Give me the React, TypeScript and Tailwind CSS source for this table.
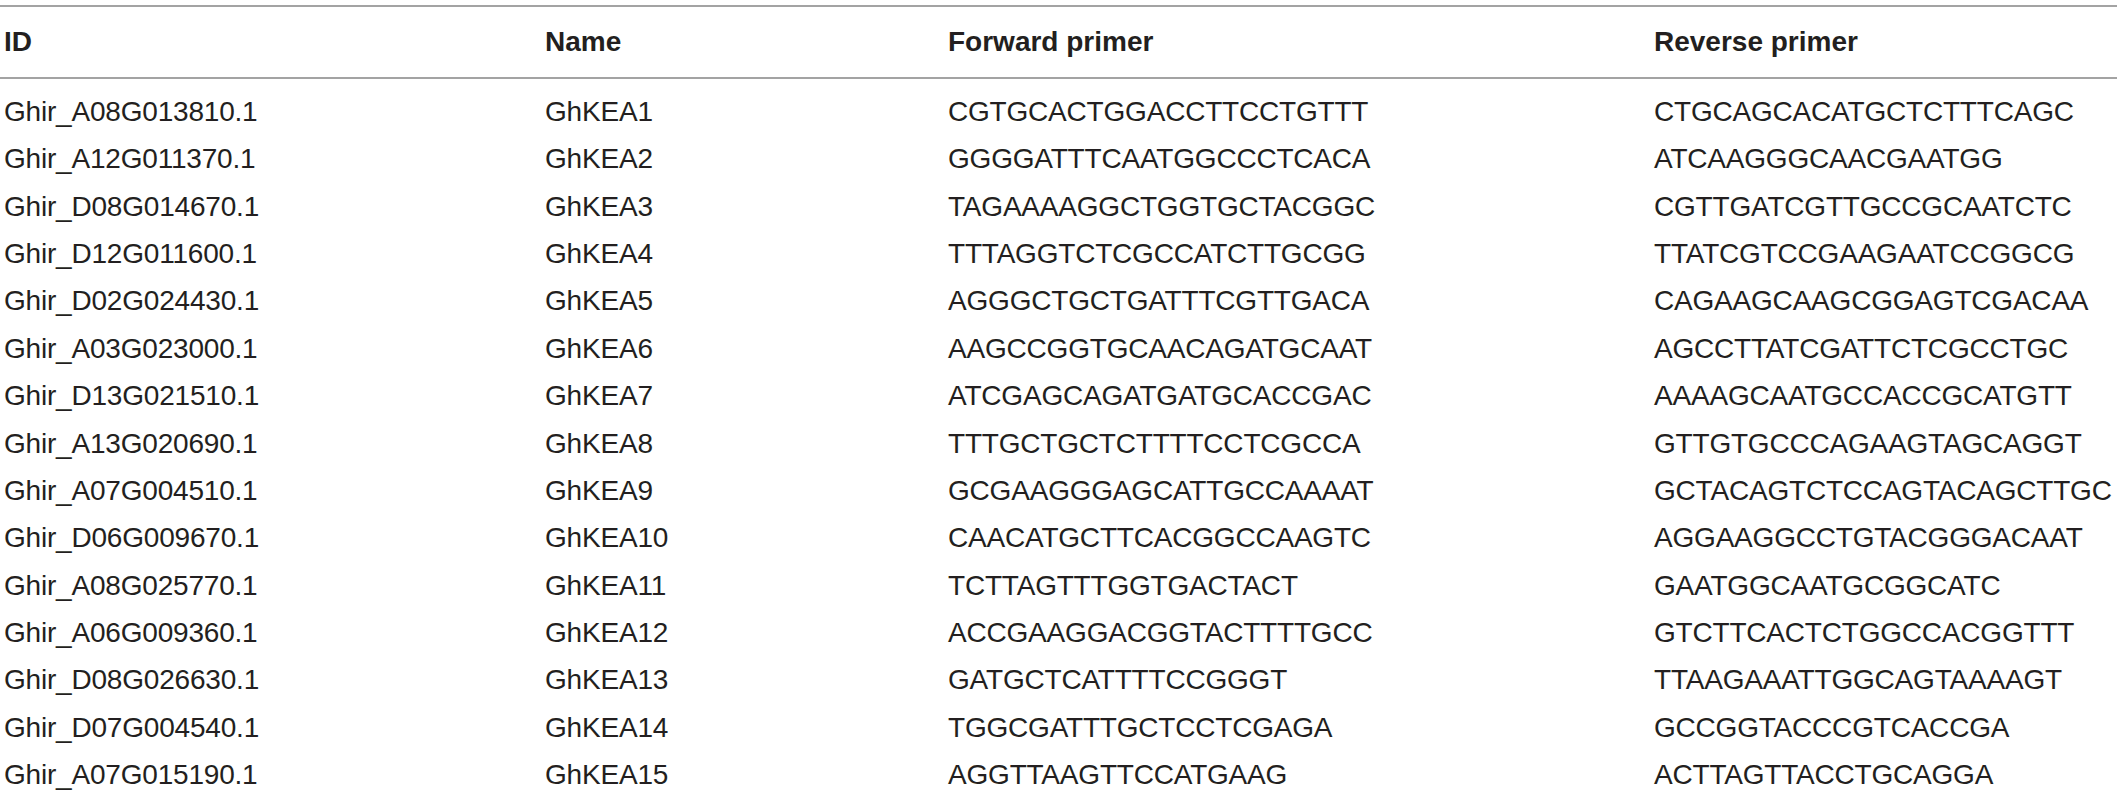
const rows: [string, string, string, string][] = [
  ["Ghir_A08G013810.1", "GhKEA1", "CGTGCACTGGACCTTCCTGTTT", "CTGCAGCACATGCTCTTTCAGC"],
  ["Ghir_A12G011370.1", "GhKEA2", "GGGGATTTCAATGGCCCTCACA", "ATCAAGGGCAACGAATGG"],
  ["Ghir_D08G014670.1", "GhKEA3", "TAGAAAAGGCTGGTGCTACGGC", "CGTTGATCGTTGCCGCAATCTC"],
  ["Ghir_D12G011600.1", "GhKEA4", "TTTAGGTCTCGCCATCTTGCGG", "TTATCGTCCGAAGAATCCGGCG"],
  ["Ghir_D02G024430.1", "GhKEA5", "AGGGCTGCTGATTTCGTTGACA", "CAGAAGCAAGCGGAGTCGACAA"],
  ["Ghir_A03G023000.1", "GhKEA6", "AAGCCGGTGCAACAGATGCAAT", "AGCCTTATCGATTCTCGCCTGC"],
  ["Ghir_D13G021510.1", "GhKEA7", "ATCGAGCAGATGATGCACCGAC", "AAAAGCAATGCCACCGCATGTT"],
  ["Ghir_A13G020690.1", "GhKEA8", "TTTGCTGCTCTTTTCCTCGCCA", "GTTGTGCCCAGAAGTAGCAGGT"],
  ["Ghir_A07G004510.1", "GhKEA9", "GCGAAGGGAGCATTGCCAAAAT", "GCTACAGTCTCCAGTACAGCTTGC"],
  ["Ghir_D06G009670.1", "GhKEA10", "CAACATGCTTCACGGCCAAGTC", "AGGAAGGCCTGTACGGGACAAT"],
  ["Ghir_A08G025770.1", "GhKEA11", "TCTTAGTTTGGTGACTACT", "GAATGGCAATGCGGCATC"],
  ["Ghir_A06G009360.1", "GhKEA12", "ACCGAAGGACGGTACTTTTGCC", "GTCTTCACTCTGGCCACGGTTT"],
  ["Ghir_D08G026630.1", "GhKEA13", "GATGCTCATTTTCCGGGT", "TTAAGAAATTGGCAGTAAAAGT"],
  ["Ghir_D07G004540.1", "GhKEA14", "TGGCGATTTGCTCCTCGAGA", "GCCGGTACCCGTCACCGA"],
  ["Ghir_A07G015190.1", "GhKEA15", "AGGTTAAGTTCCATGAAG", "ACTTAGTTACCTGCAGGA"],
];

const cols = "grid grid-cols-[541px_403px_706px_1fr] pl-[4px]";

export default function App() {
  return (
    <div className="min-h-screen bg-white pt-[5px] font-['Liberation_Sans',Arial,sans-serif] text-[28px] text-[#231f20]">
      <div className="border-t-2 border-b-2 border-[#a3a3a3]">
        <div className={`${cols} h-[70px] items-center font-bold leading-[70px]`}>
          <div>ID</div>
          <div>Name</div>
          <div>Forward primer</div>
          <div>Reverse primer</div>
        </div>
      </div>
      <div className="pt-[9px]">
        {rows.map((r) => (
          <div key={r[0]} className={`${cols} h-[47.36px] items-center leading-[47.36px] tracking-[-0.2px]`}>
            {r.map((c, i) => (
              <div key={i} className="whitespace-nowrap">
                {c}
              </div>
            ))}
          </div>
        ))}
      </div>
    </div>
  );
}
